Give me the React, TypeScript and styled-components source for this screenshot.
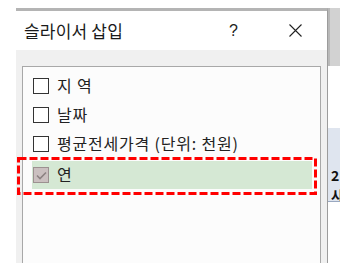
import React from 'react';
import styled, { createGlobalStyle } from 'styled-components';

const GlobalStyle = createGlobalStyle`
  html, body {
    margin: 0;
    padding: 0;
    background: #ffffff;
  }
  body {
    font-family: "Noto Sans CJK KR", "Noto Sans", sans-serif;
  }
`;

const fields = [
  { label: '지 역', checked: false },
  { label: '날짜', checked: false },
  { label: '평균전세가격 (단위: 천원)', checked: false },
  { label: '연', checked: true, marked: true },
];

const CheckMark = () => (
  <svg width="11" height="9" viewBox="0 0 11 9">
    <path d="M1 4.5 L4 7.5 L10 1.5" fill="none" stroke="#8c8282" strokeWidth="1.6" />
  </svg>
);

// red dashed callout drawn over the selected field
const Callout = () => (
  <Annotation>
    <svg width="100%" height="100%" preserveAspectRatio="none">
      <rect
        x="1.5"
        y="1.5"
        width="calc(100% - 3px)"
        height="calc(100% - 3px)"
        fill="none"
        stroke="#ff0000"
        strokeWidth="3"
        strokeDasharray="8 3"
      />
    </svg>
  </Annotation>
);

const App = () => {
  return (
    <Page>
      <GlobalStyle />
      <Gutter />
      <Dialog>
        <TitleBar>
          <Title>슬라이서 삽입</Title>
          <TitleButtons>
            <HelpButton>?</HelpButton>
            <CloseButton>
              <svg width="13" height="13" viewBox="0 0 13 13">
                <path d="M0.5 0.5 L12.5 12.5 M12.5 0.5 L0.5 12.5" stroke="#222" strokeWidth="1.1" />
              </svg>
            </CloseButton>
          </TitleButtons>
        </TitleBar>
        <Body>
          <FieldList>
            {fields.map((f) => (
              <Row key={f.label} $marked={!!f.marked}>
                <Box $checked={f.checked}>{f.checked && <CheckMark />}</Box>
                <Label>{f.label}</Label>
                {f.marked && <Callout />}
              </Row>
            ))}
          </FieldList>
        </Body>
      </Dialog>
      <Backdrop>
        <BackTop />
        <BackMid />
        <BackSheet>
          <SheetText>2</SheetText>
          <SheetText>사</SheetText>
        </BackSheet>
        <BackBottom />
      </Backdrop>
    </Page>
  );
};

const Page = styled.div`
  width: 340px;
  height: 263px;
  display: flex;
  overflow: hidden;
  background: #ffffff;
`;

const Gutter = styled.div`
  width: 16px;
  flex: none;
`;

const Dialog = styled.div`
  width: 311px;
  flex: none;
  margin-top: 8px;
  display: flex;
  flex-direction: column;
  border-top: 3px solid #b4b4b4;
  border-right: 1px solid #9c9c9c;
`;

const TitleBar = styled.div`
  height: 39px;
  background: #ffffff;
  display: flex;
  align-items: center;
  justify-content: space-between;
  padding: 0 25px 0 8px;
`;

const Title = styled.span`
  font-size: 17px;
  color: #1a1a1a;
  letter-spacing: 0.2px;
`;

const TitleButtons = styled.div`
  display: flex;
  align-items: center;
  gap: 51px;
`;

const HelpButton = styled.span`
  font-family: "Liberation Sans", sans-serif;
  font-size: 16px;
  color: #222;
`;

const CloseButton = styled.span`
  display: flex;
  align-items: center;
`;

const Body = styled.div`
  flex: 1;
  background: #f0f0f0;
  padding: 16px 6px 0 6px;
  display: flex;
`;

const FieldList = styled.div`
  flex: 1;
  background: #fcfcfc;
  border: 1px solid #a8a8a8;
  border-bottom: none;
  padding: 4px 8px 0 9px;
  display: flex;
  flex-direction: column;
`;

const Row = styled.div<{ $marked: boolean }>`
  position: relative;
  display: flex;
  align-items: center;
  gap: 8px;
  padding-left: 1px;
  background: ${(p) => (p.$marked ? '#d5e8d4' : 'transparent')};
  margin-top: ${(p) => (p.$marked ? '3px' : '0')};
  height: ${(p) => (p.$marked ? '28px' : '29px')};
`;

const Box = styled.span<{ $checked: boolean }>`
  width: 14px;
  height: 14px;
  flex: none;
  display: flex;
  align-items: center;
  justify-content: center;
  border: 1px solid ${(p) => (p.$checked ? '#9c9090' : '#333333')};
  background: ${(p) => (p.$checked ? '#cbc0c0' : '#ffffff')};
`;

const Label = styled.span`
  font-size: 16px;
  color: #222;
  line-height: 1;
  letter-spacing: 0.8px;
  padding-bottom: 2px;
`;

const Annotation = styled.span`
  position: absolute;
  left: -15px;
  right: -5px;
  top: -4px;
  bottom: -6px;
  pointer-events: none;

  & > svg {
    display: block;
  }
`;

const Backdrop = styled.div`
  flex: 1;
  display: flex;
  flex-direction: column;
  background: #ffffff;
`;

const BackTop = styled.div`
  height: 8px;
  background: #ffffff;
`;

const BackMid = styled.div`
  height: 58px;
  background: #d2d2d2;
  border-left: 2px solid #b8b8b8;
`;

const BackSheet = styled.div`
  margin-top: 62px;
  height: 74px;
  background: #dfe5ef;
  border-bottom: 1px solid #9aa8c0;
  display: flex;
  flex-direction: column;
  justify-content: flex-start;
  padding: 40px 0 0 3px;
  box-sizing: border-box;
  gap: 6px;
  overflow: hidden;
`;

const SheetText = styled.span`
  font-size: 14px;
  font-weight: bold;
  color: #111;
  line-height: 1;
`;

const BackBottom = styled.div`
  flex: 1;
`;

export default App;
